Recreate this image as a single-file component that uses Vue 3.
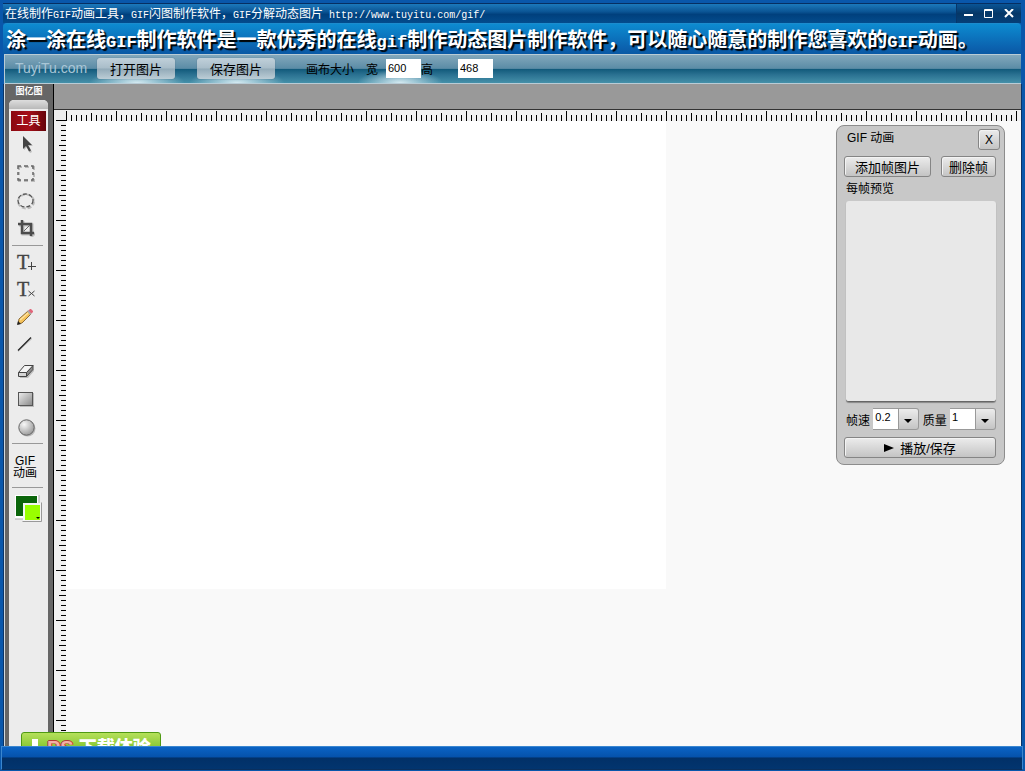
<template>
  <div class="window">
    <header class="title-bar">
      <h1 class="title">
        在线制作<span>GIF</span>动画工具，<span>GIF</span>闪图制作软件，<span>GIF</span>分解动态图片<span> http://www.tuyitu.com/gif/</span>
      </h1>
      <div class="window-controls">
        <button type="button" aria-label="最小化">
          <svg width="10" height="10" viewBox="0 0 10 10"><path d="M0 6h9" stroke="#fff" stroke-width="2" /></svg>
        </button>
        <button type="button" aria-label="最大化">
          <svg width="10" height="10" viewBox="0 0 10 10"><path d="M.5 .5h8v8h-8z M0 1.500h9" fill="none" stroke="#fff" /></svg>
        </button>
        <button type="button" aria-label="关闭">
          <svg width="10" height="10" viewBox="0 0 10 10"><path d="M1 0l8 8M9 0L1 8" stroke="#fff" stroke-width="2" /></svg>
        </button>
      </div>
    </header>

    <p class="banner">
      涂一涂在线<span>GIF</span>制作软件是一款优秀的在线<span>gif</span>制作动态图片制作软件，可以随心随意的制作您喜欢的<span>GIF</span>动画。
    </p>

    <div class="toolbar">
      <a class="brand" href="#">TuyiTu.com</a>
      <button type="button" class="glass">打开图片</button>
      <button type="button" class="glass">保存图片</button>
      <div class="size-fields">
        <span class="size-title">画布大小</span>
        <label for="canvas-width">宽</label>
        <input id="canvas-width" v-model="canvasWidth" type="text">
        <label class="height-label" for="canvas-height">高</label>
        <input id="canvas-height" v-model="canvasHeight" type="text">
      </div>
    </div>

    <main class="workspace">
      <aside class="sidebar">
        <div class="sidebar-logo">图亿图</div>
        <div class="tools">
          <div class="tools-cap"></div>
          <h2>工具</h2>

          <div v-for="(group, i) in toolGroups" :key="i" class="tool-group" :class="group.size">
            <button
              v-for="tool in group.tools"
              :key="tool.id"
              type="button"
              class="tool"
              :aria-label="tool.label"
              @click="activeTool = tool.id"
            >
              <svg width="24" height="24" viewBox="0 0 24 24" fill="none">
                <template v-if="tool.id === 'move'">
                  <path d="M10 4v13l3-3 3 6 2-1-3-6h4z" fill="#bbb" />
                  <path d="M9 3v13l3-3 3 5.500 2-1-3-5.500h4z" fill="#444" />
                </template>
                <template v-else-if="tool.id === 'marquee'">
                  <path d="M5 9V6h3M11 6h4M18 6h2v3M20 12v4M20 18v2h-3M14 20h-4M7 20H5v-3M5 14v-3" stroke="#bbb" stroke-width="2" />
                  <path d="M4 8V5h3M10 5h4M17 5h2v3M19 11v3M19 17v2h-2M14 19h-4M7 19H4v-2M4 14v-3" stroke="#666" stroke-width="1.500" />
                </template>
                <template v-else-if="tool.id === 'ellipse'">
                  <ellipse cx="12" cy="12.500" rx="8" ry="7" stroke="#bbb" stroke-width="2" stroke-dasharray="4 2" />
                  <ellipse cx="11.500" cy="11.500" rx="7.500" ry="6.500" stroke="#555" stroke-width="1.300" stroke-dasharray="4 2" />
                </template>
                <template v-else-if="tool.id === 'crop'">
                  <path d="M9 4v13h12M5 8h13v12" stroke="#bbb" stroke-width="3" />
                  <path d="M8 3v13h12M4 7h13v12" stroke="#4b4b4b" stroke-width="2.500" />
                  <path d="M10 14l6-6" stroke="#666" />
                </template>
                <template v-else-if="tool.id === 'text' || tool.id === 'text-remove'">
                  <text x="3" y="18" class="glyph">T</text>
                  <path v-if="tool.id === 'text'" d="M17.500 11v8M14 15.500h8" stroke="#444" />
                  <path v-else d="M14.500 13l6 5M20.500 13l-6 5" stroke="#444" />
                </template>
                <template v-else-if="tool.id === 'pencil'">
                  <path d="M4 19l1-5 9-8 3 3-9 9z" fill="#f5c25a" stroke="#8c6a35" />
                  <path d="M6 15l8-7" stroke="#ffe3a0" stroke-width="1.500" />
                  <path d="M13 6l2-1 3 3-2 2z" fill="#aaa" />
                  <path d="M14.500 5.500l1.500-1.500h1l2 2v1l-1.500 1.500z" fill="#e2667a" />
                  <path d="M3 20l1-4 3 3z" fill="#222" />
                </template>
                <template v-else-if="tool.id === 'line'">
                  <path d="M4 19.500L18 6.500" stroke="#bbb" />
                  <path d="M4 18.500L17 5.500" stroke="#222" stroke-width="1.200" />
                </template>
                <template v-else-if="tool.id === 'eraser'">
                  <path d="M6 18l7-1 7-7v2l-6 7H6z" fill="#bbb" />
                  <path d="M12.500 13.500l6.500-7v4l-6.500 7z" fill="#8a8a8a" stroke="#444" />
                  <path d="M4.500 13.500l6-7H19l-6.500 7z" fill="#f5f5f5" stroke="#444" />
                  <path d="M4.500 13.500h8v4h-8z" fill="#d5d5d5" stroke="#444" />
                </template>
                <template v-else-if="tool.id === 'rect'">
                  <path d="M6 6h14v14H6z" fill="#bbb" />
                  <rect x="4.500" y="5.500" width="14" height="13" fill="url(#rectFill)" stroke="#555" />
                  <linearGradient id="rectFill" x1="0" y1="0" x2="1" y2="1">
                    <stop stop-color="#eee" /><stop offset="1" stop-color="#888" />
                  </linearGradient>
                </template>
                <template v-else>
                  <circle cx="13.500" cy="13.500" r="8" fill="#bbb" />
                  <circle cx="12.500" cy="12.500" r="7.700" fill="url(#ballFill)" stroke="#666" />
                  <radialGradient id="ballFill" cx=".35" cy=".3" r=".75">
                    <stop stop-color="#f8f8f8" /><stop offset="1" stop-color="#999" />
                  </radialGradient>
                </template>
              </svg>
            </button>
          </div>

          <button type="button" class="gif-tool">GIF<br>动画</button>
          <button type="button" class="swatches" aria-label="颜色">
            <svg width="30" height="28" viewBox="0 0 30 28">
              <path d="M1 25V1h24v24z" fill="#fff" />
              <path d="M1 25h24V1" fill="none" stroke="#aaa" />
              <path d="M2 2h21v20H2z" fill="#0b650b" />
              <path d="M9 9h19v18H9z" fill="#f4f4f4" />
              <path d="M8.500 27.500h19v-19" fill="none" stroke="#999" />
              <path d="M11 11h15v15H11z" fill="#9f0" />
              <path d="M22 23h4l-2 2z" fill="#000" />
            </svg>
          </button>
        </div>
      </aside>

      <section class="editor">
        <div class="options-strip"></div>
        <div class="stage">
          <div class="corner"></div>
          <div class="ruler-x"></div>
          <div class="ruler-y"></div>
          <div class="board">
            <div class="canvas" :style="{ width: canvasWidth + 'px', height: canvasHeight + 'px' }"></div>
          </div>
        </div>
      </section>

      <section v-if="panelOpen" class="panel">
        <div class="panel-head">
          <h2>GIF 动画</h2>
          <button type="button" class="btn" aria-label="关闭面板" @click="panelOpen = false">X</button>
        </div>
        <div class="panel-actions">
          <button type="button" class="btn add">添加帧图片</button>
          <button type="button" class="btn">删除帧</button>
        </div>
        <h3>每帧预览</h3>
        <div class="preview"></div>
        <div class="panel-options">
          <label for="speed">帧速</label>
          <span class="combo">
            <select id="speed" v-model="speed">
              <option v-for="s in speeds" :key="s">{{ s }}</option>
            </select>
          </span>
          <label for="quality">质量</label>
          <span class="combo">
            <select id="quality" v-model="quality">
              <option v-for="q in qualities" :key="q">{{ q }}</option>
            </select>
          </span>
        </div>
        <button type="button" class="btn play">
          <svg width="10" height="8" viewBox="0 0 10 8"><path d="M0 0l10 4-10 4z" fill="#000" /></svg>
          播放/保存
        </button>
      </section>

      <a class="promo" href="#">
        <svg width="14" height="18" viewBox="0 0 14 18"><path d="M4 0h6v7h4l-7 8-7-8h4z" fill="#fff" /></svg>
        <b>PS</b>
        <span>下载体验</span>
      </a>
    </main>

    <footer class="status-bar"></footer>
  </div>
</template>

<script setup>
import { ref } from 'vue';

const canvasWidth = ref('600');
const canvasHeight = ref('468');

const activeTool = ref('move');
const panelOpen = ref(true);

const speeds = ['0.1', '0.2', '0.5', '1'];
const qualities = ['1', '2', '3', '4'];
const speed = ref('0.2');
const quality = ref('1');

const toolGroups = [
  {
    size: 'select-group',
    tools: [
      { id: 'move', label: '移动' },
      { id: 'marquee', label: '矩形选区' },
      { id: 'ellipse', label: '椭圆选区' },
      { id: 'crop', label: '裁剪' }
    ]
  },
  {
    size: 'draw-group',
    tools: [
      { id: 'text', label: '添加文字' },
      { id: 'text-remove', label: '删除文字' },
      { id: 'pencil', label: '铅笔' },
      { id: 'line', label: '直线' },
      { id: 'eraser', label: '橡皮' }
    ]
  },
  {
    size: 'shape-group',
    tools: [
      { id: 'rect', label: '矩形' },
      { id: 'circle', label: '圆形' }
    ]
  }
];
</script>

<style>
body {
  margin: 0;
  overflow: hidden;
}
</style>

<style scoped>
* {
  box-sizing: border-box;
}

.window {
  height: 100vh;
  display: flex;
  flex-direction: column;
  padding: 3px 0 1px;
  background: #0957ab;
  color: #000;
  font-family: "Liberation Sans", "Noto Sans CJK SC", sans-serif;
  font-size: 12px;
}

h1,
h2,
h3,
p {
  margin: 0;
  font-weight: 400;
}

button {
  padding: 0;
  border: 0;
  background: none;
  font: inherit;
  color: inherit;
}

/* 标题栏 */
.title-bar {
  flex: none;
  height: 20px;
  display: flex;
  justify-content: space-between;
  margin: 0 4px 0 3px;
  border-top: 1px solid #062f62;
  background: linear-gradient(#1c79bc, #0b5595 40%, #00407d 55%, #034c8d);
}

.title {
  padding-left: 2px;
  color: #fff;
  font-size: 12px;
  line-height: 18px;
  font-family: "Noto Sans CJK SC", sans-serif;
  white-space: pre-line;
}

.title span {
  font-family: "Liberation Mono", monospace;
  font-size: 10px;
  white-space: pre;
}

.window-controls {
  display: flex;
  align-items: center;
  gap: 10px;
  padding: 0 7px;
  border-left: 1px solid #07366a;
  background: linear-gradient(#0a5596, #053767 50%, #053f78);
}

.window-controls button {
  display: flex;
}

.banner {
  flex: none;
  height: 31px;
  margin: 0 4px 0 3px;
  padding-left: 3px;
  border-top: 1px solid #1c8ccd;
  border-radius: 4px 4px 0 0;
  background: linear-gradient(#0d8bd0, #0b61ae 80%, #0a59a4);
  color: #fff;
  font-family: "Noto Sans CJK SC", sans-serif;
  font-size: 20px;
  font-weight: 700;
  line-height: 29px;
  text-shadow: 2px 2px 1px #000;
  white-space: nowrap;
}

.banner span {
  font-family: "Liberation Mono", monospace;
  font-size: 17px;
}

.toolbar {
  flex: none;
  height: 30px;
  display: flex;
  align-items: center;
  margin: 0 4px;
  padding: 0 0 2px 10px;
  border: 1px solid #b9ccd6;
  border-right: 0;
  background:
    radial-gradient(ellipse at bottom, rgba(230, 245, 250, 0.9), transparent 70%) 84px 100% / 96px 14px no-repeat,
    radial-gradient(ellipse at bottom, rgba(230, 245, 250, 0.9), transparent 70%) 184px 100% / 96px 14px no-repeat,
    radial-gradient(ellipse at bottom, rgba(230, 245, 250, 0.9), transparent 70%) 352px 100% / 86px 14px no-repeat,
    linear-gradient(#83a8bc, #5b8ca6 48%, #11597a 50%, #2a7191 70%, #4590a9);
}

.brand {
  width: 82px;
  color: #a9c6d6;
  font-size: 14px;
  text-decoration: none;
}

.glass {
  width: 78px;
  height: 21px;
  margin-right: 22px;
  border-radius: 3px;
  background: linear-gradient(#c0d0da, #a9bdc9 48%, #92aab8 52%, #bccdd6);
  box-shadow: 0 0 1px #456;
  font-size: 13px;
}

.size-fields {
  display: flex;
  align-items: center;
  padding-left: 9px;
}

.size-title {
  width: 60px;
}

.size-fields label {
  width: 20px;
}

.size-fields .height-label {
  width: 37px;
}

.size-fields input {
  width: 35px;
  height: 19px;
  padding: 0 2px;
  border: 0;
  background: #fff;
  font-family: "Liberation Sans", sans-serif;
  font-size: 11px;
}

.workspace {
  flex: 1;
  min-height: 0;
  display: flex;
  position: relative;
  overflow: hidden;
  margin: 0 4px;
  border-left: 1px solid #cfd8de;
  background: #f9f9f9;
  box-shadow: -1px 0 #083468, 1px 0 #083468;
}

/* 左侧工具栏 */
.sidebar {
  flex: none;
  width: 49px;
  display: flex;
  flex-direction: column;
  padding: 0 4px;
  border-right: 1px solid #000;
  background: #666;
}

.sidebar-logo {
  height: 16px;
  color: #fff;
  font-size: 9px;
  font-weight: 700;
  line-height: 15px;
  text-align: center;
}

.tools {
  flex: 1;
  width: 39px;
  border-radius: 5px 5px 0 0;
  background: #ececec;
}

.tools-cap {
  height: 9px;
  border-radius: 5px 5px 0 0;
  background: linear-gradient(#ddd, #b9b9b9);
}

.tools h2 {
  height: 20px;
  margin: 2px 2px 0;
  background: linear-gradient(90deg, #8b0810, #a50f19 50%, #66040a);
  color: #fff;
  font-size: 12px;
  line-height: 20px;
  text-align: center;
}

.tool-group {
  display: flex;
  flex-direction: column;
}

.tool {
  height: 28px;
  display: flex;
  align-items: center;
  padding-left: 5px;
}

.draw-group .tool {
  height: 27px;
}

.select-group,
.shape-group {
  margin-bottom: 3px;
}

.shape-group {
  margin-top: 1px;
}

.select-group::after,
.shape-group::after {
  content: '';
  height: 1px;
  margin: 2px 5px 0 3px;
  background: #999;
}

.glyph {
  font-family: "Liberation Serif", serif;
  font-size: 20px;
  fill: #444;
  stroke: #444;
  stroke-width: 0.4px;
}

.gif-tool {
  display: block;
  width: 31px;
  height: 41px;
  margin: 0 3px 6px;
  padding-right: 5px;
  border-bottom: 1px solid #999;
  line-height: 12px;
}

.swatches {
  display: block;
  margin-left: 5px;
}

.editor {
  flex: 1;
  min-width: 0;
  display: flex;
  flex-direction: column;
}

.options-strip {
  flex: none;
  height: 26px;
  border-bottom: 1px solid #333;
  background: #999;
}

.stage {
  flex: 1;
  min-height: 0;
  display: grid;
  grid-template-columns: 12px 1fr;
  grid-template-rows: 11px 1fr;
}

.corner {
  background: linear-gradient(#000, #000) right bottom / 10px 1px no-repeat #eee;
}

.ruler-x {
  background:
    linear-gradient(90deg, #000 1px, transparent 1px) 0 100% / 50px 10px repeat-x,
    linear-gradient(90deg, #000 1px, transparent 1px) 0 100% / 25px 8px repeat-x,
    linear-gradient(90deg, #000 1px, transparent 1px) 0 100% / 5px 6px repeat-x,
    #f1f1f1;
}

.ruler-y {
  background:
    linear-gradient(#000 1px, transparent 1px) 100% -1px / 10px 50px repeat-y,
    linear-gradient(#000 1px, transparent 1px) 100% -1px / 7px 25px repeat-y,
    linear-gradient(#000 1px, transparent 1px) 100% -1px / 5px 5px repeat-y,
    #f1f1f1;
}

.board {
  min-width: 0;
  overflow: hidden;
}

.canvas {
  background: #fff;
}

/* 浮动面板 */
.panel {
  position: absolute;
  top: 41px;
  right: 16px;
  width: 169px;
  padding: 3px 8px 6px 7px;
  border: 1px solid #8d8d8d;
  border-radius: 8px;
  background: #c8c8c8;
}

.btn {
  height: 21px;
  border: 1px solid #858585;
  border-radius: 3px;
  background: linear-gradient(#ececec, #c4c4c4);
  box-shadow: inset 1px 1px 0 #f3f3f3;
}

.panel-head,
.panel-actions {
  display: flex;
  justify-content: space-between;
}

.panel-head {
  margin-right: -4px;
}

.panel-head h2 {
  padding-left: 3px;
  font-size: 12px;
  line-height: 18px;
}

.panel-head .btn {
  width: 22px;
}

.panel-actions {
  margin-top: 6px;
}

.panel-actions .btn {
  width: 55px;
  font-size: 13px;
}

.panel-actions .add {
  width: 87px;
}

.panel h3 {
  padding-left: 2px;
  font-size: 12px;
  line-height: 24px;
}

.preview {
  height: 201px;
  margin-left: 2px;
  border-radius: 3px;
  border-bottom: 1px solid #666;
  background: #e8e8e8;
  box-shadow: 0 1px 1px #888;
}

.panel-options {
  display: flex;
  align-items: center;
  justify-content: space-between;
  margin: 6px 0 7px;
  padding-left: 2px;
}

.combo {
  display: flex;
  position: relative;
}

.combo::after {
  content: '';
  position: absolute;
  top: 11px;
  right: 7px;
  border: 4px solid transparent;
  border-top-color: #000;
  pointer-events: none;
}

.combo select {
  appearance: none;
  width: 46px;
  height: 22px;
  padding: 0 0 4px 2px;
  border: 1px solid #999;
  border-left: 0;
  border-radius: 0 3px 3px 0;
  background:
    linear-gradient(#999, #999) 25px 0 / 1px 100% no-repeat,
    linear-gradient(#ececec, #c4c4c4) 100% 0 / 20px 100% no-repeat,
    #fff;
  font-family: "Liberation Sans", sans-serif;
  font-size: 11px;
  color: #000;
}

.play {
  width: 100%;
  display: flex;
  align-items: center;
  justify-content: center;
  gap: 6px;
  font-size: 13px;
}

.promo {
  position: absolute;
  left: 16px;
  bottom: -12px;
  width: 140px;
  height: 26px;
  display: flex;
  align-items: center;
  gap: 5px;
  padding: 5px 6px 0;
  border: 1px solid #4f9a13;
  border-radius: 3px;
  background: linear-gradient(#b5e05a, #69b71b);
  color: #fff;
  font-size: 18px;
  font-weight: 900;
  line-height: 20px;
  text-decoration: none;
}

.promo b {
  color: #f2b0a6;
  font-size: 20px;
  text-shadow: 1px 0 #b23838, -1px 0 #b23838, 0 -1px #b23838;
}

.status-bar {
  flex: none;
  height: 24px;
  margin: 0 2px 0 1px;
  border: 1px solid #3a86cf;
  border-bottom-color: #0a2f5e;
  background: linear-gradient(#0a63c4, #0552ab 45%, #023067 50%, #02356f);
}
</style>
